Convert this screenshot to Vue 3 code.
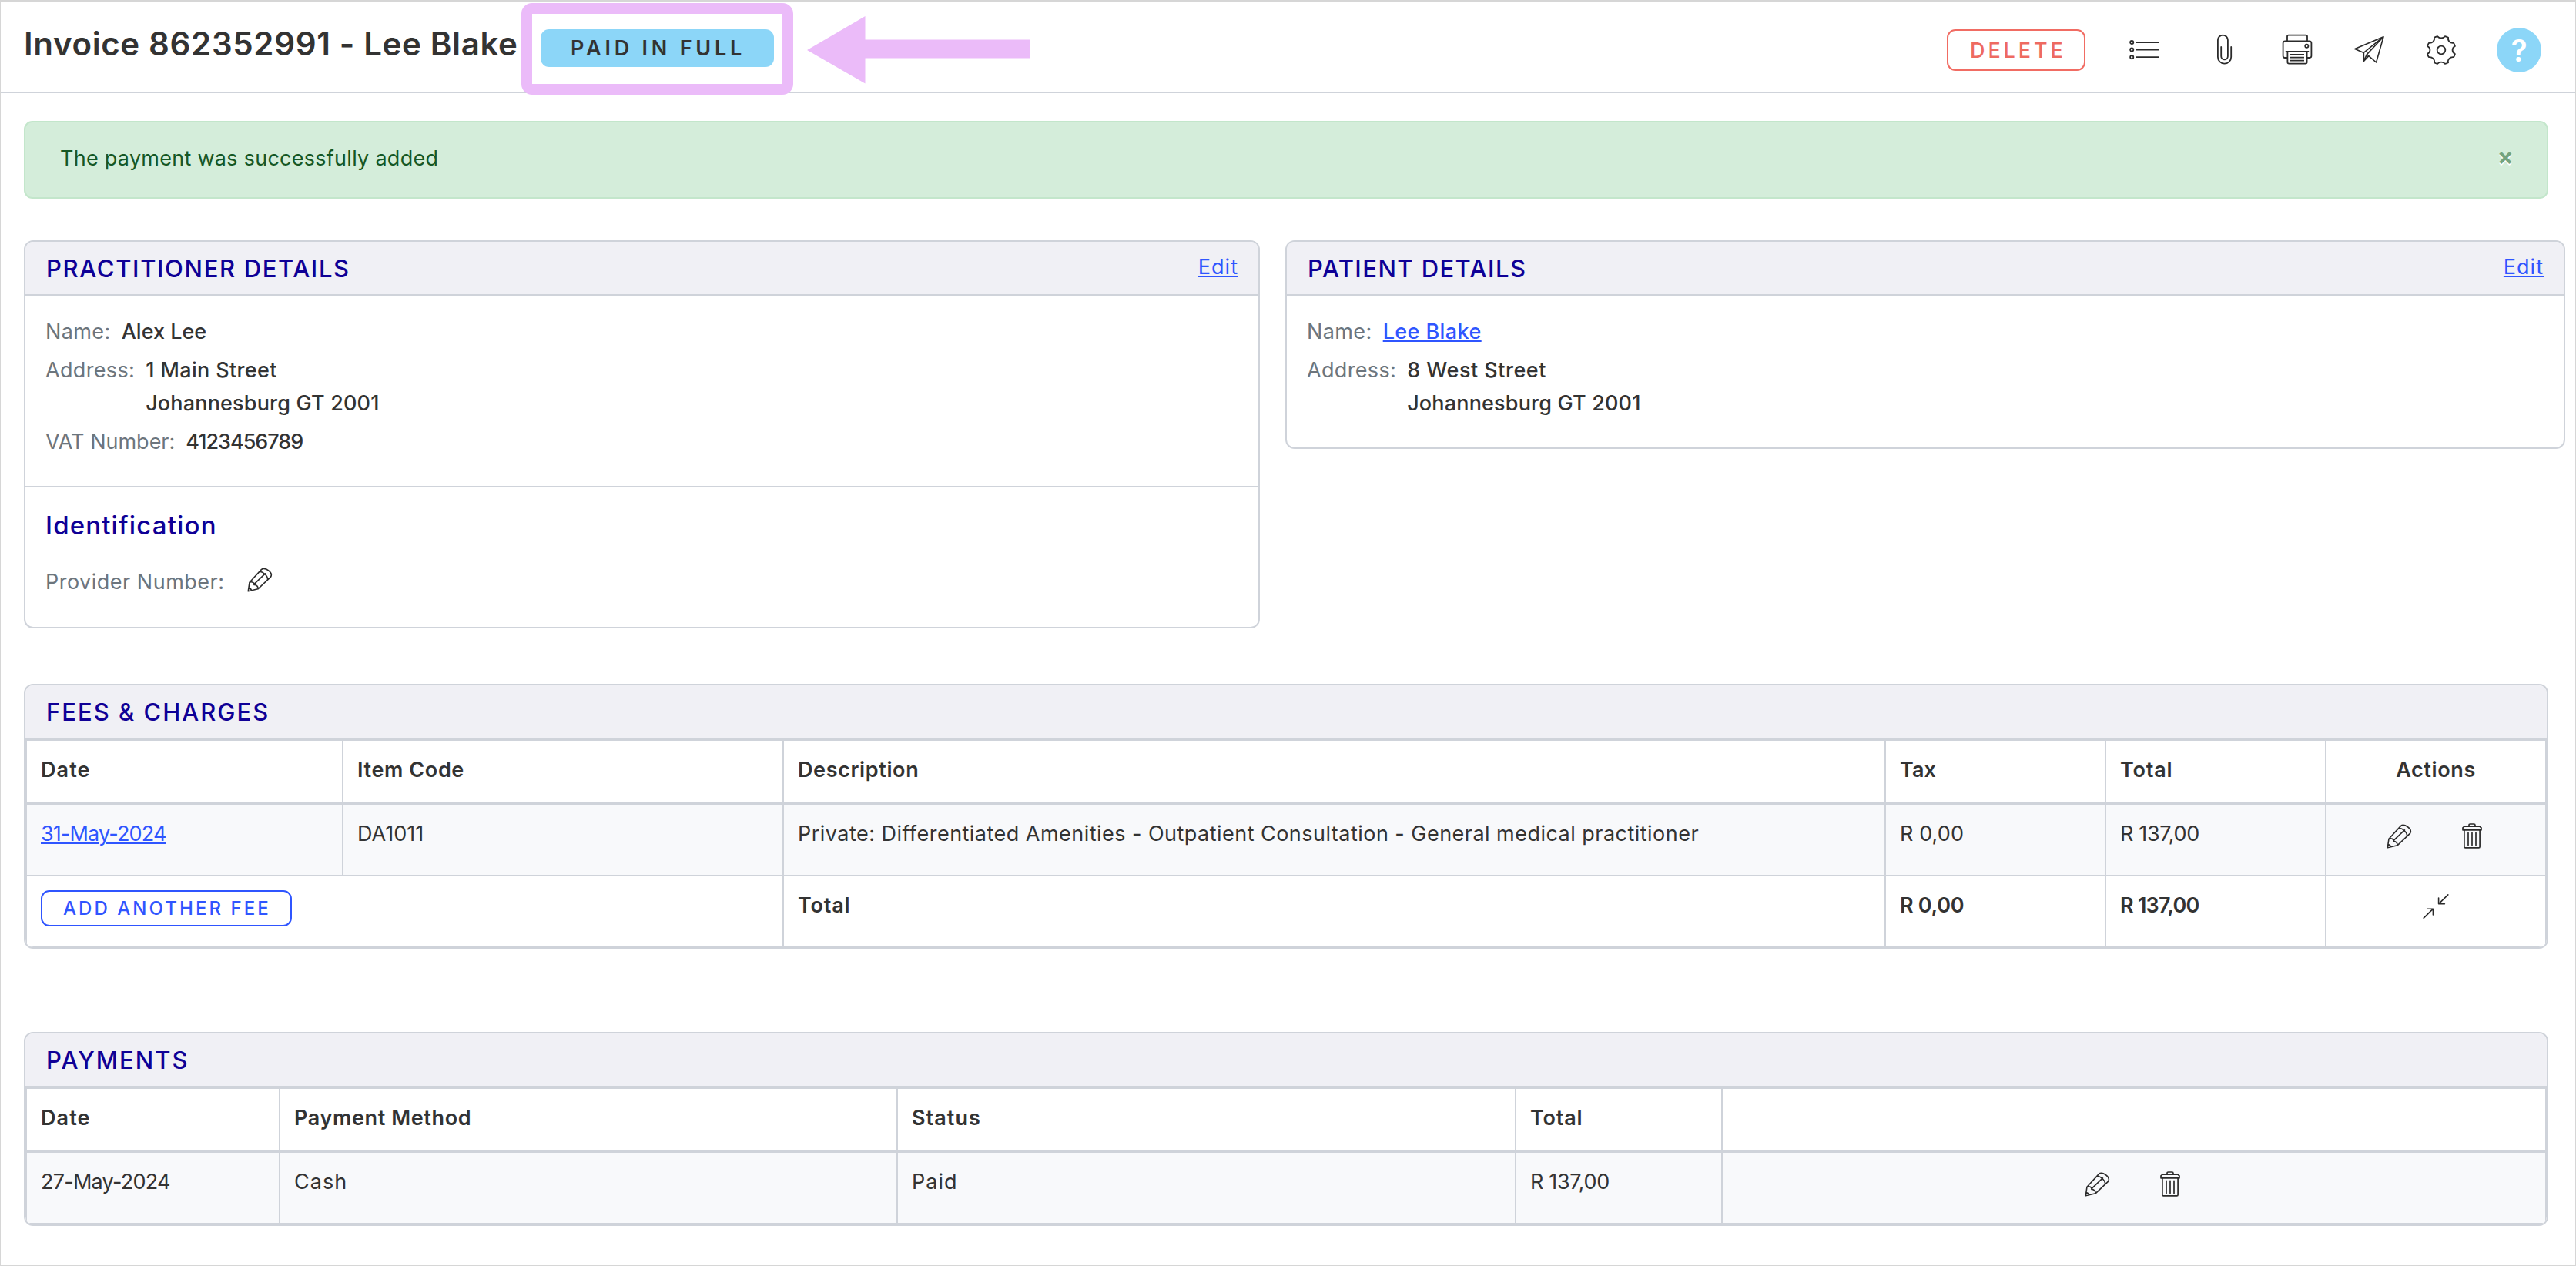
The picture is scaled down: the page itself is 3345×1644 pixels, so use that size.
<script setup>
import { h } from 'vue'

// Eight-tooth gear outline with concave notches
const gearPath = (() => {
  const cx = 20, cy = 20, r = 18.6
  const pt = (deg) => {
    const a = (deg * Math.PI) / 180
    return `${(cx + r * Math.cos(a)).toFixed(2)} ${(cy + r * Math.sin(a)).toFixed(2)}`
  }
  let d = `M${pt(15.5)}`
  for (let k = 0; k < 8; k++) {
    const c = 22.5 + 45 * k
    d += `A18.6 18.6 0 0 1 ${pt(c + 7)}A6.2 5.6 0 0 0 ${pt(c + 38)}`
  }
  return d + 'Z'
})()

const stroke = (w, hgt, d, width = 1.8) =>
  h('svg', { width: w, height: hgt, viewBox: `0 0 ${w} ${hgt}`, fill: 'none', stroke: '#2b2b2b', 'stroke-width': width, 'stroke-linejoin': 'round', 'stroke-linecap': 'round' }, [h('path', { d })])

const PencilIcon = () =>
  stroke(33, 33, 'M3 20.2 18.4 3.6C22.6-.2 34 7 30.6 13.2L14 28.8 1.3 31.7ZM3 20.2C6.2 18.8 9.4 20.6 8.9 23.4 11.8 23.3 14.6 25.8 14 28.8M15.6 6.8C19.6 5.4 27.6 12 26.4 17M8.9 22.6 23.4 8.9M2 27.6Q5 28 5.4 30.8', 1.6)
const TrashIcon = () =>
  stroke(26, 33, 'M9 4V2.6Q9 1 10.6 1H15.4Q17 1 17 2.6V4M3 4.2H23L25 6V8.8H1V6ZM2.9 9V30.4Q2.9 31.8 4.3 31.8H21.7Q23.1 31.8 23.1 30.4V9M8 12.4V28.4M13 12.4V28.4M18 12.4V28.4', 1.7)
const CollapseIcon = () =>
  stroke(34, 32, 'M32.8 .9 20.8 12.6M20.6 5V12.8H28.4M1.2 31.1 13.2 19.4M5.6 19.2H13.4V27', 1.6)

const fees = [
  { date: '31-May-2024', code: 'DA1011', description: 'Private: Differentiated Amenities - Outpatient Consultation - General medical practitioner', tax: 'R 0,00', total: 'R 137,00' },
]
const payments = [{ date: '27-May-2024', method: 'Cash', status: 'Paid', total: 'R 137,00' }]
</script>

<template>
  <div class="page">
    <header class="topbar">
      <h1>Invoice 862352991 - Lee Blake</h1>
      <div class="status">
        <span class="badge">PAID IN FULL</span>
        <span class="highlight"></span>
        <svg class="arrow" width="290" height="88" viewBox="0 0 290 88"><path d="M0 44 75.5 0V30.5H289.5V54.5H75.5V87.5Z" fill="#ebbbf9" /></svg>
      </div>
      <nav class="tools">
        <button class="delete">DELETE</button>
        <svg class="i-list" width="40" height="26" viewBox="0 0 40 26" fill="none" stroke="#2b2b2b" stroke-width="1.8">
          <circle cx="3.2" cy="3" r="2.1" /><circle cx="3.2" cy="12.6" r="2.1" /><circle cx="3.2" cy="22.2" r="2.1" />
          <path d="M8.6 3H39M8.6 12.6H39M8.6 22.2H39" />
        </svg>
        <svg class="i-clip" width="21" height="42" viewBox="0 0 21 42" fill="none" stroke="#2b2b2b" stroke-width="1.8" stroke-linecap="round">
          <path d="M6.2 17V29a4.35 4.35 0 0 0 8.7 0V8.1a6.5 6.5 0 0 0-13 0V30a8.65 8.65 0 0 0 17.3 0V17" />
        </svg>
        <svg class="i-print" width="40" height="42" viewBox="0 0 40 42" fill="none" stroke="#2b2b2b" stroke-width="1.8" stroke-linejoin="round">
          <path d="M7 9.3V3.4Q7 1.7 8.7 1.7H31.3Q33 1.7 33 3.4V9.3M7.4 31H4Q1.6 31 1.6 28.6V12Q1.6 9.3 4.2 9.3H35.8Q38.4 9.3 38.4 12V28.6Q38.4 31 36 31H32.6M4.8 23H35.2M7.4 23V36.8Q7.4 38.6 9.2 38.6H30.8Q32.6 38.6 32.6 36.8V23M11 26.8H29M11 30.6H29M11 34.6H29" />
          <circle cx="32.3" cy="15.7" r="2.1" />
        </svg>
        <svg class="i-send" width="41" height="39" viewBox="0 0 41 39" fill="none" stroke="#2b2b2b" stroke-width="1.6" stroke-linejoin="round">
          <path d="M39 1.7 1.8 17.6 13.4 22.4V33.4L19.8 26.6 29.6 35ZM39 1.7 13.4 22.4M39 1.7 17.4 24.6 13.4 33.4M17.4 24.6 19.8 26.6" />
        </svg>
        <svg class="i-gear" width="40" height="40" viewBox="0 0 40 40" fill="none" stroke="#2b2b2b" stroke-width="1.8" stroke-linejoin="round">
          <path :d="gearPath" /><circle cx="20" cy="20" r="5.3" />
        </svg>
        <span class="help">?</span>
      </nav>
    </header>

    <div class="alert">
      <span>The payment was successfully added</span>
      <span class="close">×</span>
    </div>

    <div class="details">
      <section class="card">
        <div class="card-head"><h2 class="ls-pr">PRACTITIONER DETAILS</h2><a class="edit">Edit</a></div>
        <div class="card-body">
          <div class="field"><span class="label ls-name">Name:</span><span class="value ls-0">Alex Lee</span></div>
          <div class="field"><span class="label">Address:</span><span class="value">1 Main Street<br /><span class="ls-city">Johannesburg GT 2001</span></span></div>
          <div class="field"><span class="label ls-0">VAT Number:</span><span class="value ls-vat">4123456789</span></div>
        </div>
        <div class="ident">
          <h3>Identification</h3>
          <div class="field"><span class="label ls-prov">Provider Number:</span><PencilIcon class="ident-pencil" /></div>
        </div>
      </section>

      <section class="card">
        <div class="card-head"><h2 class="ls-pt">PATIENT DETAILS</h2><a class="edit">Edit</a></div>
        <div class="card-body">
          <div class="field"><span class="label ls-name">Name:</span><a class="value ls-patient">Lee Blake</a></div>
          <div class="field"><span class="label">Address:</span><span class="value"><span class="ls-west">8 West Street</span><br /><span class="ls-city">Johannesburg GT 2001</span></span></div>
        </div>
      </section>
    </div>

    <section class="card table fees">
      <div class="card-head"><h2>FEES &amp; CHARGES</h2></div>
      <div class="row head">
        <div class="ls-date">Date</div><div>Item Code</div><div>Description</div><div class="ls-tax">Tax</div><div class="ls-total">Total</div><div class="center">Actions</div>
      </div>
      <div v-for="fee in fees" :key="fee.code" class="row data">
        <div class="ls-link"><a>{{ fee.date }}</a></div><div class="ls-0">{{ fee.code }}</div><div class="ls-desc">{{ fee.description }}</div>
        <div class="ls-tax">{{ fee.tax }}</div><div class="ls-amount">{{ fee.total }}</div>
        <div class="actions"><PencilIcon /><TrashIcon /></div>
      </div>
      <div class="row sum">
        <div class="span2"><button class="add">ADD ANOTHER FEE</button></div><div class="ls-total">Total</div>
        <div class="ls-btax">R 0,00</div><div class="ls-num">R 137,00</div>
        <div class="collapse"><CollapseIcon /></div>
      </div>
    </section>

    <section class="card table payments">
      <div class="card-head"><h2>PAYMENTS</h2></div>
      <div class="row head">
        <div class="ls-date">Date</div><div>Payment Method</div><div class="ls-status">Status</div><div class="ls-total">Total</div><div></div>
      </div>
      <div v-for="p in payments" :key="p.date" class="row data">
        <div class="ls-num">{{ p.date }}</div><div class="ls-cash">{{ p.method }}</div><div class="ls-cash">{{ p.status }}</div><div class="ls-amount">{{ p.total }}</div>
        <div class="actions"><PencilIcon /><TrashIcon /></div>
      </div>
    </section>
  </div>
</template>

<style>
body { margin: 0; background: #fff; }
</style>

<style scoped>
* { box-sizing: border-box; }
.page {
  height: 1644px;
  border: 1px solid #d6d6d6;
  border-top-width: 2px;
  font: 400 27px/43px Inter, "Liberation Sans", sans-serif;
  color: #333;
  overflow: hidden;
}
h1, h2, h3 { margin: 0; }
button { background: none; font-family: inherit; margin: 0; display: block; text-align: left; white-space: nowrap; }
svg { display: block; flex: none; }
a { color: #2f55ff; text-decoration: underline 2px; text-underline-offset: 2px; }

.topbar { height: 119px; border-bottom: 2px solid #cfd3da; padding-left: 30px; display: flex; align-items: flex-start; }
h1 { width: 671px; margin-top: 30px; font-size: 42px; line-height: 50px; font-weight: 600; letter-spacing: .64px; white-space: nowrap; }
.status { position: relative; margin-top: 36px; }
.badge { display: block; width: 303px; height: 49px; padding-left: 39px; border-radius: 11px; background: #8cd6f8; font-weight: 600; line-height: 49px; letter-spacing: 4.78px; white-space: nowrap; }
.highlight { position: absolute; inset: -34px -25px -36px; border: 14px solid #ebbbf9; border-radius: 14px; }
.arrow { position: absolute; left: 346px; top: -17px; }

.tools { margin: 34px 44px 0 auto; height: 58px; display: flex; align-items: center; }
.delete { width: 180px; height: 54px; padding: 0 0 0 28px; border: 2px solid #f16c63; border-radius: 11px; color: #ee6a61; font-size: 27px; font-weight: 500; line-height: 49px; letter-spacing: 3.9px; }
.i-list { margin-left: 57px; }
.i-clip { margin-left: 73px; }
.i-print { margin-left: 64px; }
.i-send { margin-left: 53px; }
.i-gear { margin-left: 53px; }
.help { width: 58px; height: 58px; margin-left: 52px; border-radius: 50%; background: #8cd6f8; color: #fff; text-align: center; font-size: 39px; font-weight: 600; line-height: 59px; }

.alert { width: 3278px; height: 101px; margin: 36px 0 0 30px; padding: 0 43px 4px 45px; border: 2px solid #c3e6cb; border-radius: 11px; background: #d4edda; color: #155724; letter-spacing: .27px; display: flex; align-items: center; justify-content: space-between; }
.close { margin-bottom: 6px; font-size: 31px; font-weight: 700; color: #74a37e; text-shadow: 0 2px 0 #fff; line-height: 40px; }

.details { display: grid; grid-template-columns: 1605px 1662px; gap: 33px; align-items: start; margin: 54px 0 0 30px; }
.card { border: 2px solid #cfd3da; border-radius: 12px; overflow: hidden; }
.card-head { height: 70px; border-bottom: 2px solid #cfd3da; background: #f0f0f5; padding: 0 26px 0 27px; display: flex; justify-content: space-between; }
h2 { font-size: 31px; font-weight: 500; line-height: 69px; color: #0f0096; letter-spacing: 2px; }
.edit { line-height: 66px; letter-spacing: 1px; }
.card-body { padding: 25px 26px 36px; display: flex; flex-direction: column; gap: 7px; }
.field { display: flex; }
.label { color: #6c757d; margin-right: 14px; letter-spacing: .34px; }
.value { font-weight: 500; letter-spacing: .34px; }
.ident { border-top: 2px solid #cfd3da; padding: 29px 26px 37px; }
h3 { font-size: 33px; font-weight: 500; line-height: 40px; color: #0f0096; letter-spacing: 1.15px; margin-bottom: 32px; }
.ident-pencil { margin: 2px 0 0 15px; }

.table { width: 3278px; margin-left: 30px; }
.fees { margin-top: 72px; }
.payments { margin-top: 108px; }
.row { display: grid; border: 0 solid #cfd3da; border-width: 0 2px; line-height: 40px; }
.fees .row { grid-template-columns: 411px 572px 1431px 286px 286px 1fr; }
.payments .row { grid-template-columns: 329px 802px 803px 268px 1fr; }
.row > div { padding: 18px 0 0 18px; border-right: 2px solid #cfd3da; white-space: nowrap; }
.row > div:last-child { border-right: 0; }
.row > .center { padding-left: 0; text-align: center; }
.head { height: 85px; border-width: 2px 2px 4px; font-weight: 600; letter-spacing: .62px; }
.data { height: 93px; border-bottom-width: 2px; background: #f8f9fb; }
.sum { height: 92px; border-bottom-width: 2px; font-weight: 600; }
.row > .span2 { grid-column: span 2; padding-top: 18px; }
.row > .actions { padding: 24px 4px 0 0; display: flex; justify-content: center; gap: 65px; }
.row > .collapse { padding: 23px 0 0; display: flex; justify-content: center; }
.add { width: 326px; height: 47px; padding: 0 0 0 27px; border: 2px solid #2f55ff; border-radius: 11px; color: #2f55ff; font-size: 24px; font-weight: 500; line-height: 43px; letter-spacing: 3.05px; }

.ls-0 { letter-spacing: 0; }
.ls-pr { letter-spacing: 1.65px; }
.ls-pt { letter-spacing: 1.44px; }
.ls-name { letter-spacing: .4px; }
.ls-city { letter-spacing: .17px; }
.ls-vat { letter-spacing: -1.03px; }
.ls-prov { letter-spacing: .5px; }
.ls-patient { letter-spacing: .4px; }
.ls-west { letter-spacing: .5px; }
.ls-date { letter-spacing: 1.1px; }
.ls-status { letter-spacing: 1.04px; }
.ls-total { letter-spacing: .8px; }
.ls-tax { letter-spacing: .1px; }
.ls-btax { letter-spacing: -.3px; }
.ls-num { letter-spacing: -.75px; }
.ls-link { letter-spacing: -.85px; }
.ls-amount { letter-spacing: -.35px; }
.ls-desc { letter-spacing: .47px; }
.ls-cash { letter-spacing: 1px; }
</style>
